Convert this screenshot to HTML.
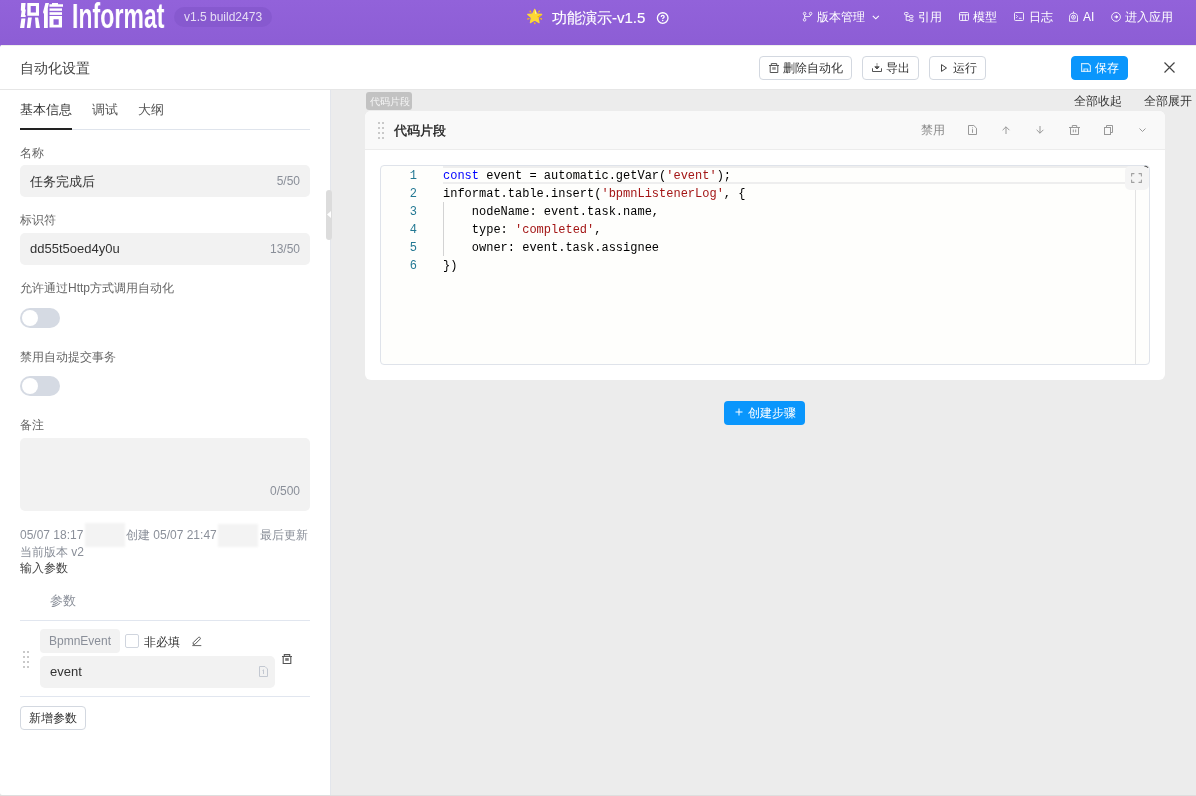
<!DOCTYPE html>
<html><head><meta charset="utf-8">
<style>
*{box-sizing:border-box;margin:0;padding:0}
html,body{width:1196px;height:796px;overflow:hidden;background:#dedede;font-family:"Liberation Sans",sans-serif;color:#333}
.t{position:absolute;white-space:nowrap;line-height:1;will-change:transform}
.b{position:absolute}
svg{position:absolute;overflow:visible}
.btn{position:absolute;height:24px;border:1px solid #d3d8e0;border-radius:4px;background:#fff}
.inp{position:absolute;left:20px;width:290px;height:32px;background:#f2f2f2;border-radius:5px}
.lbl{font-size:12px;color:#666}
.cnt{font-size:12px;color:#8a8f99}
.tog{position:absolute;left:20px;width:40px;height:20px;border-radius:10px;background:#d5dae3}
.tog:after{content:"";position:absolute;left:2px;top:2px;width:16px;height:16px;border-radius:50%;background:#fff}
.dot{position:absolute;width:2px;height:2px;background:#c9c9c9}
.code{position:absolute;will-change:transform;font-family:"Liberation Mono",monospace;font-size:12px;line-height:18px;white-space:pre;color:#000}
.ln{position:absolute;will-change:transform;font-family:"Liberation Mono",monospace;font-size:12px;line-height:18px;color:#237893;text-align:right}
.s{color:#a31515}.k{color:#0000ff}
.nv{font-size:12px;color:#fff}
</style></head><body>
<!-- header -->
<div class="b" style="left:0;top:0;width:1196px;height:50px;background:linear-gradient(#9262da,#8c5dd4)"></div>
<svg style="left:0;top:0" width="70" height="32" viewBox="0 0 70 32" fill="#fff">
<path d="M21.2 3H25.6L25 9.2 25.8 9.8 25 15 25.8 15.6 25.6 17H20.8L21.6 11 20.8 10.2z"/>
<path d="M21.4 18.6H25.4L24.3 28H20z"/>
<path fill-rule="evenodd" d="M27.3 3H39V15.8H27.3zM30.7 6.1V12.6H35.9V6.1z"/>
<path d="M28 17.6H31.8L30.4 28H26.8z"/>
<path d="M35 17.6H38.2L39.9 28H35.9z"/>
<path d="M45.4 3H49L47.8 8V28H44V14L43 12.2z"/>
<path d="M52 3H58V4.3H63V6.8H49.4V4.3H52z"/>
<path d="M49.5 8.4H62V10.8H49.5z"/>
<path d="M49.5 12.2H62V14.9H49.5z"/>
<path fill-rule="evenodd" d="M49.5 16H62V27.5H49.5zM53.5 19.2V24.8H58.7V19.2z"/>
</svg>
<div class="t" style="left:72px;top:-2px;font-size:35px;font-weight:bold;color:#fff;transform:scaleX(0.66);transform-origin:0 0">Informat</div>
<div class="b" style="left:174px;top:7px;width:98px;height:20px;border-radius:10px;background:#8759cf"></div>
<div class="t" style="left:184px;top:11px;font-size:12px;color:#e6dcf5">v1.5 build2473</div>
<div class="t" style="left:526px;top:9px;font-size:14px">&#x1F31F;</div>
<div class="t" style="left:552px;top:10px;font-size:15px;color:#fff;-webkit-text-stroke:0.15px #fff">功能演示-v1.5</div>
<svg style="left:656px;top:12px" width="13" height="13" viewBox="0 0 13 13"><circle cx="6.7" cy="6.05" r="5.3" fill="none" stroke="#fff" stroke-width="1.3"/><path d="M5.2 4.9c0-.9.6-1.5 1.5-1.5s1.5.6 1.5 1.4c0 .8-.5 1-1 1.3-.4.3-.5.5-.5 1" fill="none" stroke="#fff" stroke-width="1.2"/><circle cx="6.7" cy="8.4" r=".75" fill="#fff"/></svg>
<!-- nav icons -->
<svg style="left:802px;top:11px" width="11" height="11" viewBox="0 0 11 11" fill="none" stroke="#fff" stroke-opacity=".85" stroke-width="1"><circle cx="2.6" cy="2.6" r="1.3"/><circle cx="2.6" cy="8.8" r="1.3"/><circle cx="8.6" cy="2.6" r="1.3"/><path d="M2.6 3.9v3.6M8.6 3.9c0 1.6-.8 1.7-2.5 1.7H3"/></svg>
<div class="t nv" style="left:817px;top:11px">版本管理</div>
<svg style="left:872px;top:15px" width="8" height="5" viewBox="0 0 8 5" fill="none" stroke="#fff" stroke-width="1.1"><path d="M.8.8l3 3 3-3"/></svg>
<svg style="left:904px;top:12px" width="10" height="10" viewBox="0 0 10 10" fill="none" stroke="#fff" stroke-opacity=".85" stroke-width="1"><rect x=".5" y=".5" width="3.6" height="2.3" rx=".8"/><rect x="5.4" y="3.4" width="3.6" height="2.3" rx=".8"/><rect x="5.4" y="7.1" width="3.6" height="2.3" rx=".8"/><path d="M2.2 2.8v5.5h3.2M2.2 4.5h3.2"/></svg>
<div class="t nv" style="left:918px;top:11px">引用</div>
<svg style="left:959px;top:12px" width="10" height="9" viewBox="0 0 10 9" fill="none" stroke="#fff" stroke-opacity=".85" stroke-width="1"><rect x=".5" y=".5" width="9" height="8" rx="1"/><path d="M.5 2.8h9M3.6 2.8v5.7M6.4 2.8v5.7"/></svg>
<div class="t nv" style="left:973px;top:11px">模型</div>
<svg style="left:1014px;top:12px" width="10" height="9" viewBox="0 0 10 9" fill="none" stroke="#fff" stroke-opacity=".85" stroke-width="1"><rect x=".5" y=".5" width="9" height="8" rx="1"/><path d="M2.2 3.2l1.3 1.3-1.3 1.4M5 6.3h2.6"/></svg>
<div class="t nv" style="left:1029px;top:11px">日志</div>
<svg style="left:1069px;top:11px" width="9" height="11" viewBox="0 0 9 11" fill="none" stroke="#fff" stroke-opacity=".85" stroke-width="1"><path d="M.5 10.3V6.2a4 4 0 0 1 8 0v4.1z"/><circle cx="4.5" cy="6.2" r="2"/><circle cx="4.5" cy="6.2" r=".6"/><path d="M4.5 2.2V.5"/></svg>
<div class="t nv" style="left:1083px;top:11px">AI</div>
<svg style="left:1111px;top:12px" width="10" height="10" viewBox="0 0 10 10" fill="none" stroke="#fff" stroke-opacity=".85" stroke-width="1"><circle cx="5" cy="4.9" r="4.4"/><path d="M3.2 4.9h2.4"/><path d="M5.2 3.6l1.7 1.3-1.7 1.3z" fill="#fff"/></svg>
<div class="t nv" style="left:1125px;top:11px">进入应用</div>

<!-- modal -->
<div class="b" style="left:0;top:45px;width:1196px;height:750px;background:#fff;border-top-left-radius:2px;border-bottom-left-radius:2px"></div>
<div class="b" style="left:1px;top:45px;width:1195px;height:1px;background:#eef0ec"></div>
<div class="b" style="left:0;top:89px;width:1196px;height:1px;background:#e6e6e6"></div>
<div class="t" style="left:20px;top:61px;font-size:14px;color:#444">自动化设置</div>
<div class="btn" style="left:759px;top:56px;width:93px"></div>
<svg style="left:769px;top:63px" width="10" height="10" viewBox="0 0 10 10" fill="none" stroke="#555" stroke-width="1"><path d="M0 2.5h10M2.3 2.5V.6h5.4v1.9M1.2 2.5v7h7.6v-7"/><rect x="3.2" y="4.1" width="3.6" height="2.7" fill="#999" stroke="none"/></svg>
<div class="t" style="left:783px;top:62px;font-size:12px;color:#333">删除自动化</div>
<div class="btn" style="left:862px;top:56px;width:57px"></div>
<svg style="left:872px;top:63px" width="10" height="9" viewBox="0 0 10 9" fill="none" stroke="#555" stroke-width="1"><path d="M5 0v5.5" stroke="#999"/><path d="M2.8 3.8L5 6 7.2 3.8z" fill="#555"/><path d="M.5 5.3v3.2h9V5.3"/></svg>
<div class="t" style="left:886px;top:62px;font-size:12px;color:#333">导出</div>
<div class="btn" style="left:929px;top:56px;width:57px"></div>
<svg style="left:941px;top:64px" width="6" height="8" viewBox="0 0 6 8" fill="none" stroke="#444" stroke-width="1"><path d="M.5.6v6.8L5.5 4z"/></svg>
<div class="t" style="left:953px;top:62px;font-size:12px;color:#333">运行</div>
<div class="btn" style="left:1071px;top:56px;width:57px;background:#0a96fc;border-color:#0a96fc"></div>
<svg style="left:1081px;top:63px" width="10" height="9" viewBox="0 0 10 9" fill="none" stroke="#fff" stroke-opacity=".75" stroke-width="1.2"><path d="M.6.6h6.6l2.2 2.2v5.6H.6z"/><path d="M3 8.4V6h3.6v2.4"/></svg>
<div class="t" style="left:1095px;top:62px;font-size:12px;color:#fff">保存</div>
<svg style="left:1164px;top:62px" width="11" height="11" viewBox="0 0 11 11" fill="none" stroke="#444" stroke-width="1.2"><path d="M.5.5l10 10M10.5.5l-10 10"/></svg>

<!-- left panel -->
<div class="b" style="left:330px;top:90px;width:1px;height:705px;background:#e3e6ec"></div>
<div class="t" style="left:20px;top:103px;font-size:13px;color:#333">基本信息</div>
<div class="t" style="left:92px;top:103px;font-size:13px;color:#555">调试</div>
<div class="t" style="left:138px;top:103px;font-size:13px;color:#555">大纲</div>
<div class="b" style="left:20px;top:129px;width:290px;height:1px;background:#dfe4ec"></div>
<div class="b" style="left:20px;top:128px;width:52px;height:2px;background:#222"></div>

<div class="t lbl" style="left:20px;top:147px">名称</div>
<div class="inp" style="top:165px"></div>
<div class="t" style="left:30px;top:175px;font-size:13px;color:#333">任务完成后</div>
<div class="t cnt" style="left:270px;top:175px;width:30px;text-align:right">5/50</div>

<div class="t lbl" style="left:20px;top:214px">标识符</div>
<div class="inp" style="top:233px"></div>
<div class="t" style="left:30px;top:242px;font-size:13px;color:#333">dd55t5oed4y0u</div>
<div class="t cnt" style="left:260px;top:243px;width:40px;text-align:right">13/50</div>

<div class="t lbl" style="left:20px;top:282px">允许通过Http方式调用自动化</div>
<div class="tog" style="top:308px"></div>

<div class="t lbl" style="left:20px;top:351px">禁用自动提交事务</div>
<div class="tog" style="top:376px"></div>

<div class="t lbl" style="left:20px;top:419px">备注</div>
<div class="inp" style="top:438px;height:73px"></div>
<div class="t cnt" style="left:250px;top:485px;width:50px;text-align:right">0/500</div>

<div class="t" style="left:20px;top:529px;font-size:12px;color:#8a8f99">05/07 18:17</div>
<div class="b" style="left:85px;top:523px;width:40px;height:24px;background:#f3f3f3;filter:blur(1px)"></div>
<div class="t" style="left:126px;top:529px;font-size:12px;color:#8a8f99">创建 05/07 21:47</div>
<div class="b" style="left:218px;top:524px;width:40px;height:23px;background:#f3f3f3;filter:blur(1px)"></div>
<div class="t" style="left:260px;top:529px;font-size:12px;color:#8a8f99">最后更新</div>
<div class="t" style="left:20px;top:546px;font-size:12px;color:#8a8f99">当前版本 v2</div>
<div class="t" style="left:20px;top:562px;font-size:12px;color:#444">输入参数</div>

<div class="t" style="left:50px;top:594px;font-size:13px;color:#8a8f99">参数</div>
<div class="b" style="left:20px;top:620px;width:290px;height:1px;background:#e1e6ef"></div>

<div class="dot" style="left:23px;top:651px"></div><div class="dot" style="left:27px;top:651px"></div>
<div class="dot" style="left:23px;top:656px"></div><div class="dot" style="left:27px;top:656px"></div>
<div class="dot" style="left:23px;top:661px"></div><div class="dot" style="left:27px;top:661px"></div>
<div class="dot" style="left:23px;top:666px"></div><div class="dot" style="left:27px;top:666px"></div>

<div class="b" style="left:40px;top:629px;width:80px;height:24px;background:#f2f2f2;border-radius:4px"></div>
<div class="t" style="left:49px;top:635px;font-size:12px;color:#8a8f99">BpmnEvent</div>
<div class="b" style="left:125px;top:634px;width:14px;height:14px;border:1px solid #d0d5de;border-radius:2px;background:#fff"></div>
<div class="t" style="left:144px;top:636px;font-size:12px;color:#333">非必填</div>
<svg style="left:192px;top:636px" width="10" height="10" viewBox="0 0 10 10" fill="none" stroke="#555" stroke-width="1"><path d="M1.2 6.6L6.4 1.4a1 1 0 0 1 1.4 0l.3.3a1 1 0 0 1 0 1.4L2.9 8.3H1.2z"/><path d="M.3 9.6h9" stroke="#666"/></svg>
<div class="inp" style="left:40px;width:235px;top:656px"></div>
<div class="t" style="left:50px;top:665px;font-size:13px;color:#333">event</div>
<svg style="left:259px;top:666px" width="9" height="11" viewBox="0 0 9 11" fill="none" stroke="#c3c8d1" stroke-width="1"><path d="M.5.5h5.5l2.5 2.5v7.5h-8z"/><path d="M3.5 4.5l1-.7v4.2"/></svg>
<svg style="left:282px;top:654px" width="10" height="10" viewBox="0 0 10 10" fill="none" stroke="#555" stroke-width="1.1"><path d="M0 2.5h10M2.3 2.5V.6h5.4v1.9M1.2 2.5v7h7.6v-7"/><rect x="3.2" y="4.1" width="3.6" height="2.7" fill="#777" stroke="none"/></svg>
<div class="b" style="left:20px;top:696px;width:290px;height:1px;background:#e1e6ef"></div>

<div class="b" style="left:20px;top:706px;width:66px;height:24px;border:1px solid #d3d8e0;border-radius:4px"></div>
<div class="t" style="left:29px;top:712px;font-size:12px;color:#333">新增参数</div>

<!-- right area -->
<div class="b" style="left:331px;top:90px;width:865px;height:705px;background:#ececec"></div>
<div class="b" style="left:326px;top:190px;width:6px;height:50px;border-radius:3px;background:#dcdcdc"></div>
<svg style="left:327px;top:211px" width="4" height="7" viewBox="0 0 4 7"><path d="M4 0v7L0 3.5z" fill="#fff"/></svg>
<div class="b" style="left:366px;top:92px;width:46px;height:18px;border-radius:3px;background:#c2c2c2"></div>
<div class="t" style="left:370px;top:97px;font-size:9.7px;color:#f5f5f5">代码片段</div>
<div class="t" style="left:1074px;top:95px;font-size:12px;color:#333">全部收起</div>
<div class="t" style="left:1144px;top:95px;font-size:12px;color:#333">全部展开</div>

<div class="b" style="left:365px;top:111px;width:800px;height:269px;background:#fff;border-radius:6px;overflow:hidden">
  <div class="b" style="left:0;top:0;width:800px;height:39px;background:#f9f9f9;border-bottom:1px solid #ececec"></div>
</div>
<div class="dot" style="left:378px;top:122px"></div><div class="dot" style="left:382px;top:122px"></div>
<div class="dot" style="left:378px;top:127px"></div><div class="dot" style="left:382px;top:127px"></div>
<div class="dot" style="left:378px;top:132px"></div><div class="dot" style="left:382px;top:132px"></div>
<div class="dot" style="left:378px;top:137px"></div><div class="dot" style="left:382px;top:137px"></div>
<div class="t" style="left:394px;top:124px;font-size:13px;color:#222;-webkit-text-stroke:0.35px #222">代码片段</div>
<div class="t" style="left:921px;top:124px;font-size:12px;color:#888">禁用</div>
<svg style="left:968px;top:125px" width="9" height="10" viewBox="0 0 9 10" fill="none" stroke="#999" stroke-width="1"><path d="M.5.5h5.3l2.7 2.7v6.3h-8z"/><path d="M4.5 4.2v3.6M4.5 2.4v.9"/></svg>
<svg style="left:1002px;top:126px" width="8" height="8" viewBox="0 0 8 8" fill="none" stroke="#999" stroke-width="1"><path d="M4 8V.8M.6 4.2L4 .8l3.4 3.4"/></svg>
<svg style="left:1036px;top:126px" width="8" height="8" viewBox="0 0 8 8" fill="none" stroke="#999" stroke-width="1"><path d="M4 0v7.2M.6 3.8L4 7.2l3.4-3.4"/></svg>
<svg style="left:1069px;top:125px" width="11" height="10" viewBox="0 0 11 10" fill="none" stroke="#999" stroke-width="1"><path d="M0 2.5h11M3.3 2.5V.5h4.4v2M1.5 2.5v7h8v-7M4.3 4.5v2.8M6.7 4.5v2.8"/></svg>
<svg style="left:1104px;top:125px" width="9" height="10" viewBox="0 0 9 10" fill="none" stroke="#999" stroke-width="1"><path d="M2.5 2.5V.5h6v7H6.5"/><rect x=".5" y="2.5" width="6" height="7"/></svg>
<svg style="left:1139px;top:128px" width="7" height="4" viewBox="0 0 7 4" fill="none" stroke="#999" stroke-width="1"><path d="M.5.5l3 3 3-3"/></svg>

<!-- editor -->
<div class="b" style="left:380px;top:165px;width:770px;height:200px;border:1px solid #dfe3ea;border-radius:4px;background:#fefefc"></div>
<div class="b" style="left:443px;top:166px;width:692px;height:18px;border:2px solid #eeeeee;border-right:none;border-left:none"></div>
<div class="b" style="left:443px;top:202px;width:1px;height:54px;background:#d3d3d3"></div>
<div class="b" style="left:1135px;top:189px;width:1px;height:175px;background:#e3e3e3"></div>
<div class="b" style="left:1125px;top:166px;width:24px;height:24px;border-radius:5px;background:#f4f4f4"></div>
<svg style="left:1131px;top:173px" width="11" height="10" viewBox="0 0 11 10" fill="none" stroke="#a0a0a0" stroke-width="1.1" stroke-linecap="round" stroke-linejoin="round"><path d="M.6 3V.6H3M8 .6h2.4V3M10.4 7v2.4H8M3 9.4H.6V7"/></svg>
<svg style="left:1144px;top:165px" width="5" height="4" viewBox="0 0 5 4" fill="none" stroke="#555" stroke-width="1.1" stroke-linecap="round"><path d="M.9 1.3Q2.6 1.2 3.8 2.5"/></svg>
<div class="ln" style="left:396px;top:167px;width:21px">1<br>2<br>3<br>4<br>5<br>6</div>
<div class="code" style="left:443px;top:167px"><span class="k">const</span> event = automatic.getVar(<span class="s">'event'</span>);
informat.table.insert(<span class="s">'bpmnListenerLog'</span>, {
    nodeName: event.task.name,
    type: <span class="s">'completed'</span>,
    owner: event.task.assignee
})</div>

<div class="b" style="left:724px;top:401px;width:81px;height:24px;border-radius:4px;background:#0a96fc"></div>
<svg style="left:735px;top:408px" width="8" height="8" viewBox="0 0 8 8" fill="none" stroke="#fff" stroke-width="1"><path d="M4 .5v7M.5 4h7"/></svg>
<div class="t" style="left:748px;top:407px;font-size:12px;color:#fff">创建步骤</div>
</body></html>
